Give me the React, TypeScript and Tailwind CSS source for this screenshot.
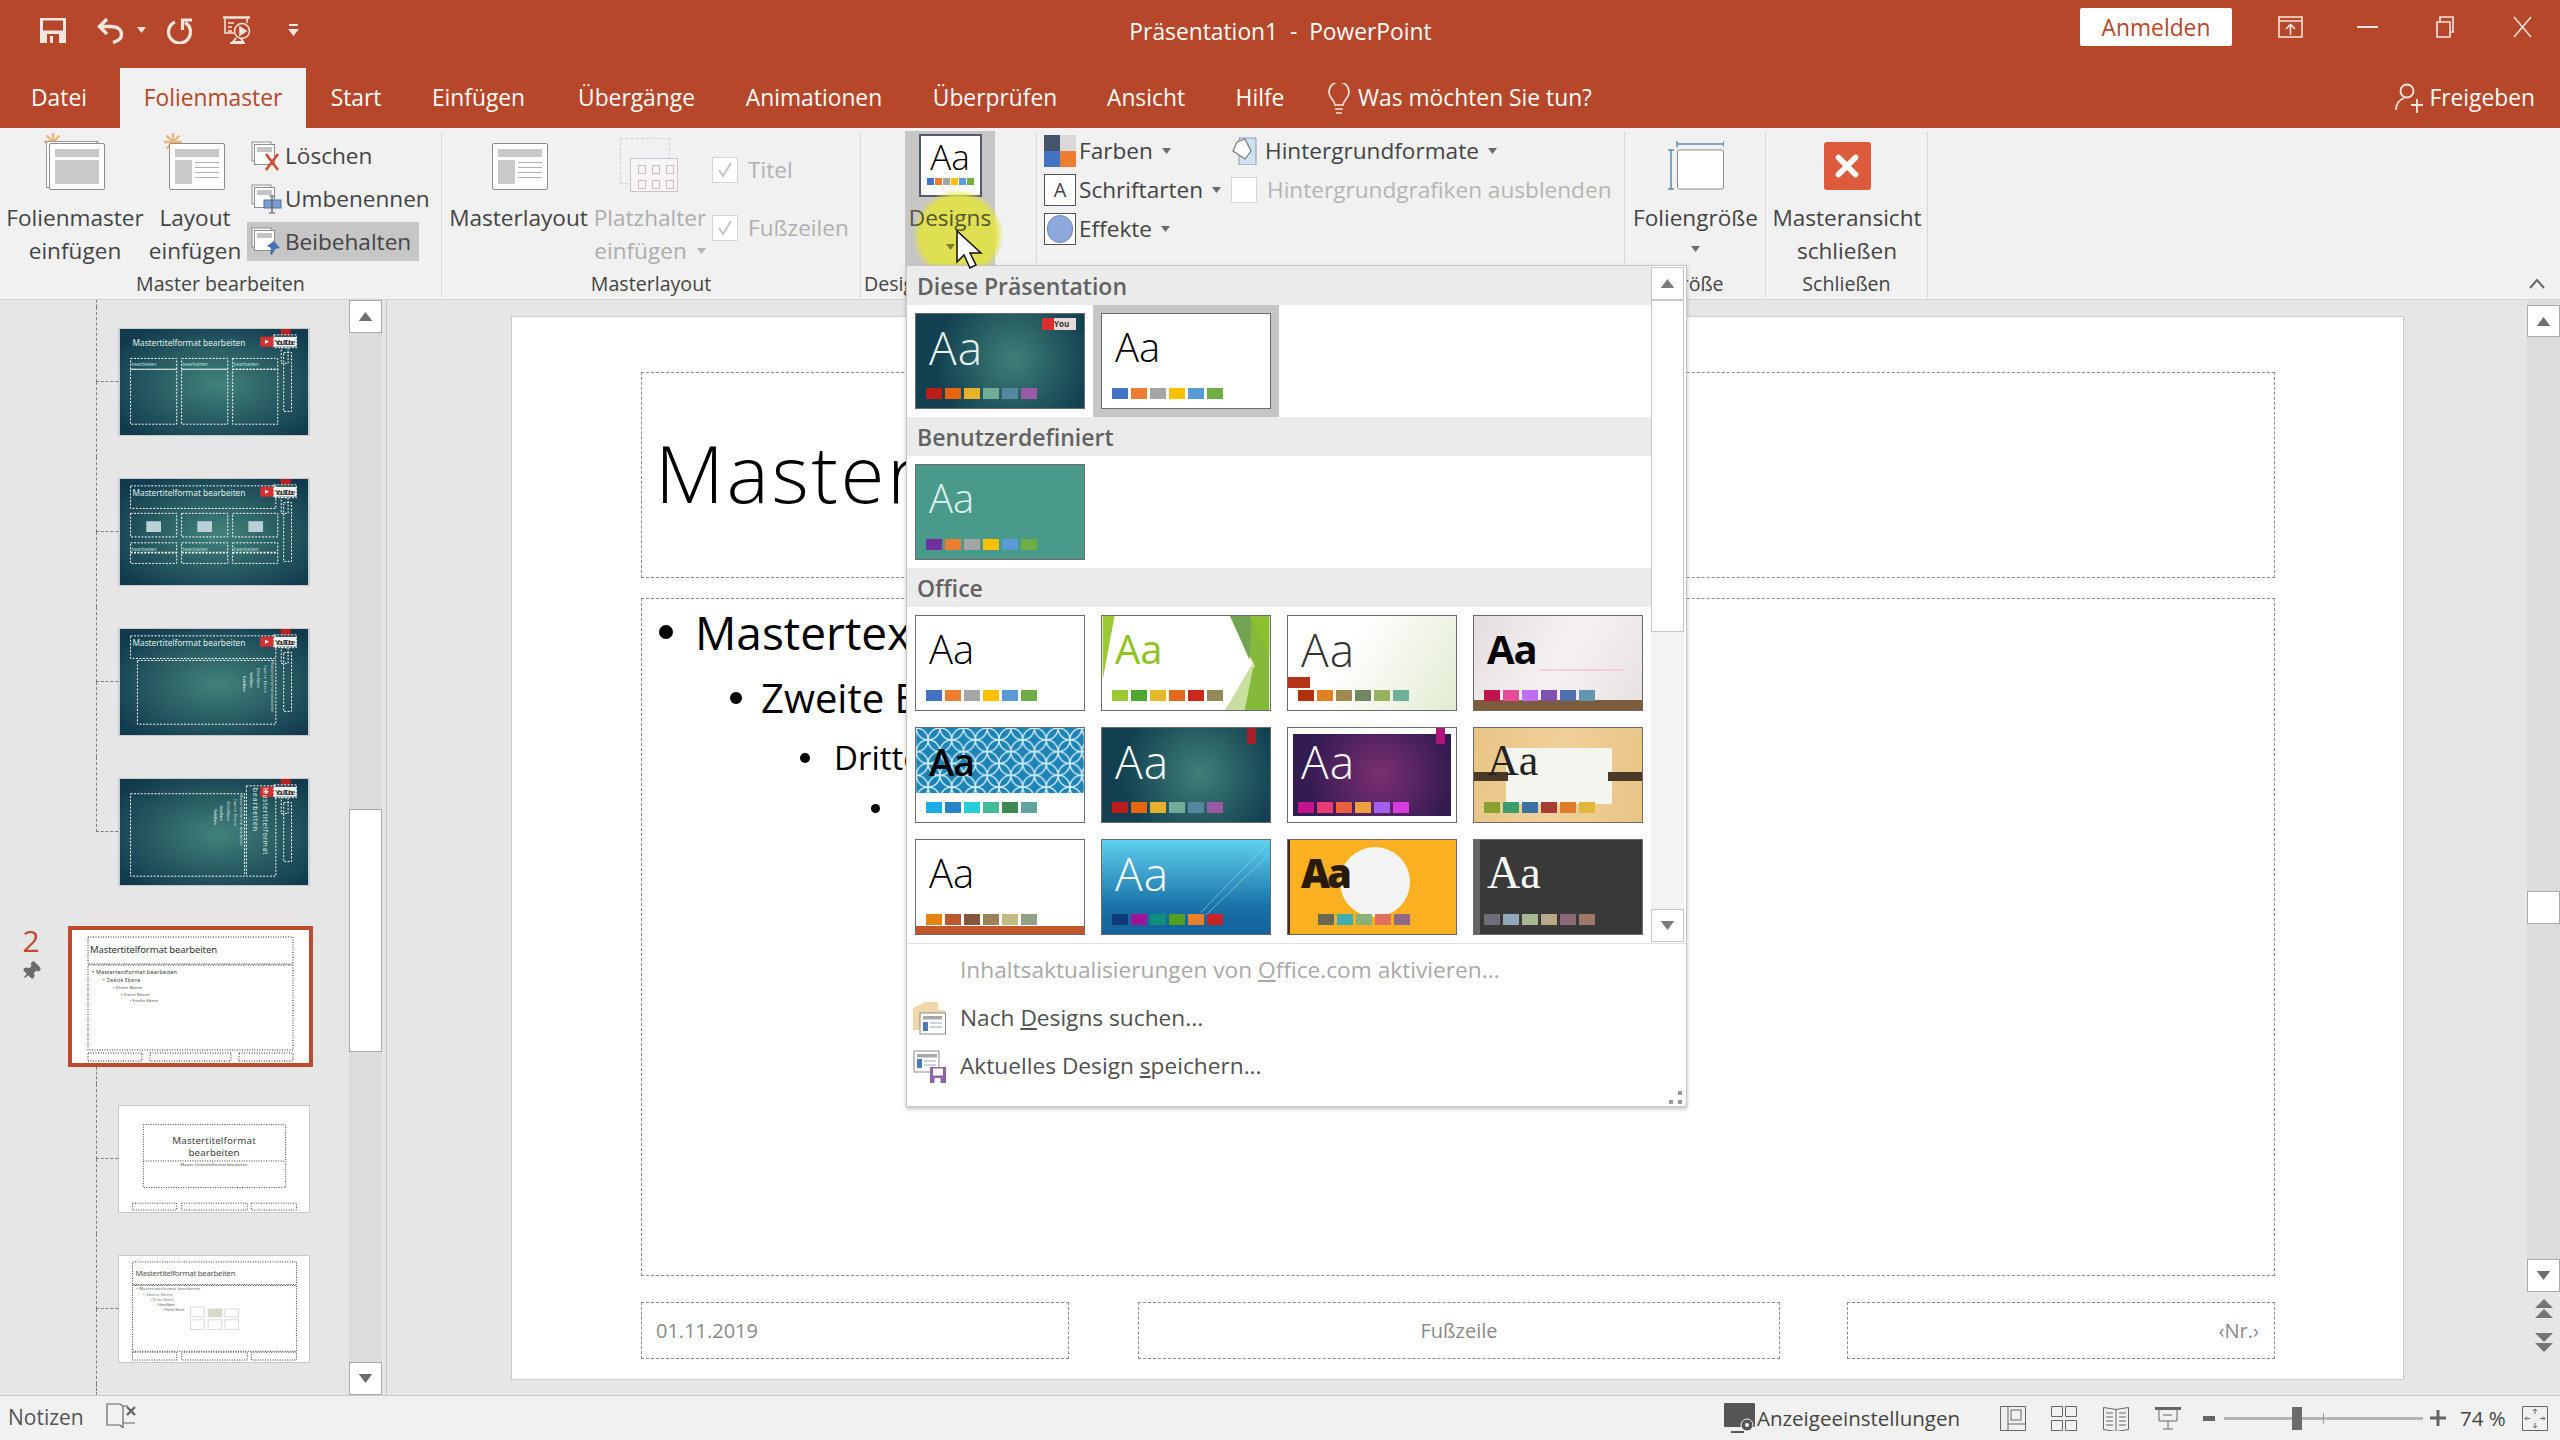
import { ReactNode } from "react"
import { Pin, X } from "lucide-react"

// ---- small icons ----

const Arrow = ({ color = "#6b6b6b", className = "" }: { color?: string; className?: string }) => (
  <svg width="9" height="6" viewBox="0 0 9 6" className={className}>
    <path d="M0 0h9L4.500 6z" fill={color} />
  </svg>
)

const Sun = () => (
  <svg width="20" height="20" viewBox="0 0 20 20" className="absolute left-0 top-0" stroke="#e9b878" strokeWidth="2.400">
    <path d="M10 1v18M1 10h18M3.500 3.500l13 13M16.500 3.500l-13 13" />
  </svg>
)

function LayoutIcon({ star, full, stacked }: { star?: boolean; full?: boolean; stacked?: boolean }) {
  return (
    <div className="relative w-[62px] h-[58px] -ml-[3px]">
      {star && <Sun />}
      {stacked && <div className="absolute left-[3px] top-[9px] w-[52px] h-[47px] border border-[#9a9a9a] bg-white" />}
      <div className="absolute left-[6px] top-[11px] w-[56px] h-[47px] rounded-[2px] border border-[#8c8c8c] bg-white p-[5px] flex flex-col gap-[3px]">
        <div className="h-[8px] bg-[#c9c9c9]" />
        {full ? (
          <div className="flex-1 bg-[#c9c9c9]" />
        ) : (
          <div className="flex-1 flex gap-[3px]">
            <div className="w-[17px] bg-[#c9c9c9]" />
            <div className="flex-1 flex flex-col gap-[4px] pt-[2px]">
              <div className="h-px bg-[#b0b0b0]" />
              <div className="h-px bg-[#b0b0b0]" />
              <div className="h-px bg-[#b0b0b0]" />
              <div className="h-px bg-[#b0b0b0]" />
            </div>
          </div>
        )}
      </div>
    </div>
  )
}

function SmallSlideIcon({ badge }: { badge: "x" | "rename" | "pin" }) {
  return (
    <svg width="31" height="30" viewBox="0 0 31 30">
      <rect x="1" y="1" width="19" height="19" fill="#f7f7f7" stroke="#8f8f8f" />
      <rect x="3.500" y="3.500" width="20" height="20" fill="#fff" stroke="#8f8f8f" />
      <rect x="6" y="6" width="15" height="5" fill="#c4c4c4" />
      {badge === "x" && <path d="M15 13l12 16M27 13L15 29" stroke="#cf4b32" strokeWidth="2.600" />}
      {badge === "rename" && (
        <g>
          <rect x="13" y="16" width="17" height="8" fill="#7aa0cf" stroke="#44709f" />
          <path d="M21 12v17M18 12h6M18 29h6" stroke="#555" strokeWidth="1.200" />
        </g>
      )}
      {badge === "pin" && <path d="M23 14l6 7-5 1-3 6-2-1 1-6-4-2z" fill="#4472b4" />}
    </svg>
  )
}

const FolderIcon = () => (
  <svg width="34" height="33" viewBox="0 0 34 33">
    <path d="M0 6l12-6h13v8h7v20H0z" fill="#f0d8ac" />
    <rect x="7" y="11" width="25.500" height="21" fill="#fff" stroke="#8a8a8a" />
    <rect x="10" y="14" width="19" height="3.500" fill="#a8a8a8" />
    <rect x="10" y="20" width="5" height="9" fill="#4a7bb5" />
    <path d="M17 21h12M17 25h12" stroke="#9ab" />
  </svg>
)

const SaveThemeIcon = () => (
  <svg width="34" height="33" viewBox="0 0 34 33">
    <rect x="1" y="1" width="25" height="21" fill="#fff" stroke="#8a8a8a" />
    <rect x="4" y="4" width="20" height="3.500" fill="#a8a8a8" />
    <rect x="4" y="9" width="5" height="9" fill="#4a7bb5" />
    <path d="M11 11h12M11 15h12" stroke="#9ab" />
    <path d="M17 17h16v16H17z" fill="#8f64ad" />
    <rect x="20" y="18.500" width="10" height="7" fill="#fff" />
    <rect x="21.500" y="28" width="6" height="5" fill="#fff" />
  </svg>
)

// ---- ribbon pieces ----

function LargeButton({ icon, lines, width, muted, arrow, arrowBelow }: { icon: ReactNode; lines: string[]; width: string; muted?: boolean; arrow?: boolean; arrowBelow?: boolean }) {
  return (
    <div className={`${width} flex flex-col items-center shrink-0`}>
      <div className="h-[69px] flex items-start justify-center">{icon}</div>
      {lines.map((l, i) => (
        <div key={l} className={`leading-[33px] whitespace-nowrap flex items-center ${muted ? "text-[#adadad]" : "text-[#444444]"}`}>
          {l}
          {arrow && i === lines.length - 1 && <Arrow color="#b5b5b5" className="ml-[10px]" />}
        </div>
      ))}
      {arrowBelow && <Arrow className="mt-[12px]" />}
    </div>
  )
}

function Group({ width, label, labelClass = "justify-center", children }: { width: string; label?: string; labelClass?: string; children: ReactNode }) {
  return (
    <div className={`${width} shrink-0 h-[166px] border-r border-[#d8d8d8] flex flex-col`}>
      <div className="h-[138px] flex">{children}</div>
      <div className={`h-[28px] flex items-center text-[19.600px] text-[#444444] whitespace-nowrap ${labelClass}`}>{label}</div>
    </div>
  )
}

const Checkbox = ({ checked }: { checked?: boolean }) => (
  <div className="w-[26px] h-[26px] border border-[#d5d5d5] bg-white flex items-center justify-center shrink-0">
    {checked && (
      <svg width="18" height="18" viewBox="0 0 18 18">
        <path d="M3 9l4 6 8-13" fill="none" stroke="#c4c4c4" strokeWidth="2" />
      </svg>
    )}
  </div>
)

function SmallRow({ badge, label, active }: { badge: "x" | "rename" | "pin"; label: string; active?: boolean }) {
  return (
    <div className={`h-[39px] w-fit flex items-center gap-[3px] pl-[4px] pr-[8px] ${active ? "bg-[#c6c6c6]" : ""}`}>
      <SmallSlideIcon badge={badge} />
      <span>{label}</span>
    </div>
  )
}

function ThemeRow({ icon, label, arrow = true }: { icon: ReactNode; label: string; arrow?: boolean }) {
  return (
    <div className="h-[32px] flex items-center whitespace-nowrap">
      <div className="w-[32px] h-[32px] shrink-0">{icon}</div>
      <span className="ml-[3px]">{label}</span>
      {arrow && <Arrow className="ml-[9px]" />}
    </div>
  )
}

// ---- left panel thumbnails ----

const YouTube = () => (
  <g>
    <rect x="164" y="0" width="10" height="6" fill="#b92020" />
    <rect x="143" y="8" width="14" height="10" rx="1" fill="#d63030" />
    <path d="M148 11l4 2-4 2z" fill="#fff" />
    <rect x="157" y="8" width="23" height="10" fill="#f2f2f2" />
    <text x="158" y="16" fontSize="8" fontFamily="Liberation Sans" fontWeight="700" fill="#333" textLength="21">YouTube</text>
    <rect x="157" y="6" width="23" height="13" fill="none" stroke="#fff" strokeDasharray="2 1.500" />
    <rect x="167" y="24" width="8" height="60" fill="none" stroke="#fff" strokeDasharray="2 1.500" />
    <rect x="164.500" y="19" width="7" height="16" fill="none" stroke="#fff" strokeDasharray="2 1.500" />
  </g>
)

function TealSlide({ children, title = true }: { children?: ReactNode; title?: boolean }) {
  return (
    <svg viewBox="0 0 192 108" className="block w-full h-full">
      <defs>
        <radialGradient id="tealBg" cx="52%" cy="52%" r="65%">
          <stop offset="0" stopColor="#42827a" />
          <stop offset="1" stopColor="#113a4d" />
        </radialGradient>
      </defs>
      <rect width="192" height="108" fill="url(#tealBg)" />
      {title && (
        <text x="13" y="17" fontSize="8.500" fill="#dfeeea" fontFamily="Noto Sans" textLength="115">Mastertitelformat bearbeiten</text>
      )}
      <YouTube />
      <g fill="none" stroke="#fff" strokeDasharray="2 1.500">{children}</g>
    </svg>
  )
}

const smallText = { fontFamily: "Noto Sans" }

const ThumbColumns = () => (
  <TealSlide>
    <rect x="11" y="30" width="47" height="11" />
    <rect x="63" y="30" width="47" height="11" />
    <rect x="115" y="30" width="46" height="11" />
    <rect x="11" y="41" width="47" height="56" />
    <rect x="63" y="41" width="47" height="56" />
    <rect x="115" y="41" width="46" height="56" />
    <text x="12" y="38" fontSize="5" fill="#a8e0d8" stroke="none" {...smallText}>bearbeiten</text>
    <text x="64" y="38" fontSize="5" fill="#a8e0d8" stroke="none" {...smallText}>bearbeiten</text>
    <text x="116" y="38" fontSize="5" fill="#a8e0d8" stroke="none" {...smallText}>bearbeiten</text>
  </TealSlide>
)

const ThumbCompare = () => (
  <TealSlide>
    <rect x="11" y="7" width="148" height="23" />
    <rect x="11" y="35" width="47" height="24" />
    <rect x="63" y="35" width="47" height="24" />
    <rect x="115" y="35" width="46" height="24" />
    <rect x="27" y="43" width="15" height="11" fill="#b9d0d6" stroke="none" />
    <rect x="79" y="43" width="15" height="11" fill="#b9d0d6" stroke="none" />
    <rect x="131" y="43" width="15" height="11" fill="#b9d0d6" stroke="none" />
    <rect x="11" y="65" width="47" height="21" />
    <rect x="63" y="65" width="47" height="21" />
    <rect x="115" y="65" width="46" height="21" />
    <path d="M11 75h47M63 75h47M115 75h46" strokeWidth="2" />
    <text x="12" y="73" fontSize="5" fill="#a8e0d8" stroke="none" {...smallText}>bearbeiten</text>
    <text x="64" y="73" fontSize="5" fill="#a8e0d8" stroke="none" {...smallText}>bearbeiten</text>
    <text x="116" y="73" fontSize="5" fill="#a8e0d8" stroke="none" {...smallText}>bearbeiten</text>
  </TealSlide>
)

const ThumbVertical = () => (
  <TealSlide>
    <rect x="11" y="7" width="148" height="23" />
    <rect x="18" y="32" width="141" height="65" />
    <g stroke="none" fill="#dfeeea" fontSize="3.500" {...smallText}>
      <text transform="translate(154 33) rotate(90)" textLength="52">Mastertextformat bearbeiten</text>
      <text transform="translate(147 37) rotate(90)" textLength="28">Zweite Ebene</text>
      <text transform="translate(140 40) rotate(90)" textLength="20">Dritte Ebene</text>
      <text transform="translate(133 44) rotate(90)" textLength="16">Vierte Ebene</text>
      <text transform="translate(126 48) rotate(90)" textLength="16">Fünfte Ebene</text>
    </g>
  </TealSlide>
)

const ThumbVerticalTitle = () => (
  <TealSlide title={false}>
    <rect x="11" y="15" width="116" height="84" />
    <rect x="129" y="7" width="30" height="92" />
    <g stroke="none" fill="#dfeeea" fontSize="7" {...smallText}>
      <text transform="translate(146 9) rotate(90)" textLength="68">Mastertitelformat</text>
      <text transform="translate(136 9) rotate(90)" textLength="44">bearbeiten</text>
    </g>
    <g stroke="none" fill="#dfeeea" fontSize="3.500" {...smallText}>
      <text transform="translate(122 16) rotate(90)" textLength="52">Mastertextformat bearbeiten</text>
      <text transform="translate(116 20) rotate(90)" textLength="28">Zweite Ebene</text>
      <text transform="translate(109 23) rotate(90)" textLength="20">Dritte Ebene</text>
      <text transform="translate(102 27) rotate(90)" textLength="16">Vierte Ebene</text>
      <text transform="translate(96 31) rotate(90)" textLength="16">Fünfte Ebene</text>
    </g>
  </TealSlide>
)

const ThumbMaster = () => (
  <svg viewBox="0 0 237 133" className="block w-full h-full bg-white">
    <g fill="none" stroke="#333" strokeDasharray="1 1.500">
      <rect x="16" y="7" width="205" height="27" />
      <rect x="16" y="35" width="205" height="85" />
      <rect x="16" y="123" width="54" height="8" />
      <rect x="78" y="123" width="81" height="8" />
      <rect x="167" y="123" width="54" height="8" />
    </g>
    <g fill="#333" {...smallText}>
      <text x="18" y="23" fontSize="9.500" textLength="127">Mastertitelformat bearbeiten</text>
      <text x="20" y="44" fontSize="5.500" textLength="85">• Mastertextformat bearbeiten</text>
      <text x="31" y="52" fontSize="4.500" textLength="37">• Zweite Ebene</text>
      <text x="41" y="59" fontSize="4" textLength="29">• Dritte Ebene</text>
      <text x="49" y="66" fontSize="3.500" textLength="28">• Vierte Ebene</text>
      <text x="58" y="72" fontSize="3.500" textLength="28">• Fünfte Ebene</text>
    </g>
  </svg>
)

const ThumbTitle = () => (
  <svg viewBox="0 0 192 108" className="block w-full h-full bg-white">
    <g fill="none" stroke="#333" strokeDasharray="1 1.500">
      <rect x="24" y="19" width="145" height="64" />
      <path d="M24 56h145" />
      <rect x="13" y="99" width="45" height="7" />
      <rect x="63" y="99" width="67" height="7" />
      <rect x="134" y="99" width="46" height="7" />
    </g>
    <g fill="#444" textAnchor="middle" {...smallText}>
      <text x="96" y="39" fontSize="10" textLength="85">Mastertitelformat</text>
      <text x="96" y="51" fontSize="10" textLength="52">bearbeiten</text>
      <text x="96" y="61" fontSize="4" textLength="68">Master-Untertitelformat bearbeiten</text>
    </g>
  </svg>
)

const ThumbContent = () => (
  <svg viewBox="0 0 192 108" className="block w-full h-full bg-white">
    <g fill="none" stroke="#333" strokeDasharray="1 1.500">
      <rect x="13" y="6" width="167" height="23" />
      <rect x="13" y="30" width="167" height="67" />
      <rect x="13" y="98" width="45" height="8" />
      <rect x="63" y="98" width="67" height="8" />
      <rect x="134" y="98" width="46" height="8" />
    </g>
    <g fill="#555" {...smallText}>
      <text x="16" y="20" fontSize="8" textLength="102">Mastertitelformat bearbeiten</text>
      <text x="17" y="35" fontSize="4" textLength="65">• Mastertextformat bearbeiten</text>
      <text x="24" y="41" fontSize="3.500" textLength="30">• Zweite Ebene</text>
      <text x="31" y="46" fontSize="3" textLength="24">• Dritte Ebene</text>
      <text x="38" y="51" fontSize="3" textLength="18">• Vierte Ebene</text>
      <text x="44" y="56" fontSize="3" textLength="22">• Fünfte Ebene</text>
    </g>
    <g fill="none" stroke="#d8d8d8">
      <rect x="72" y="52" width="14" height="10" />
      <rect x="90" y="54" width="14" height="8" fill="#dcd8c8" />
      <rect x="107" y="54" width="14" height="8" />
      <rect x="72" y="65" width="14" height="10" />
      <rect x="90" y="65" width="14" height="10" />
      <rect x="107" y="65" width="14" height="10" />
    </g>
  </svg>
)

function TreeRow({ height, last, children }: { height: string; last?: boolean; children: ReactNode }) {
  return (
    <div className={`${height} flex items-center`}>
      <div className="w-[22px] self-stretch flex flex-col shrink-0">
        <div className="h-1/2 border-l border-b border-dashed border-[#7f7f7f]" />
        {!last && <div className="h-1/2 border-l border-dashed border-[#7f7f7f]" />}
      </div>
      <div className="w-[192px] h-[108px] border-[1.500px] border-[#c9c9c9] bg-white shrink-0">{children}</div>
    </div>
  )
}

function Scrollbar({ up, down, thumb, children }: { up: string; down: string; thumb?: ReactNode; children?: ReactNode }) {
  return (
    <div className="w-[33px] h-full flex flex-col bg-[#dcdcdc] shrink-0">
      <div className={`${up} shrink-0 bg-white border border-[#ababab] flex items-center justify-center`}>
        <Arrow color="#6f6f6f" className="w-[17px] h-[9px] rotate-180" />
      </div>
      {thumb}
      <div className="flex-1" />
      <div className={`${down} shrink-0 bg-white border border-[#ababab] flex items-center justify-center`}>
        <Arrow color="#6f6f6f" className="w-[17px] h-[9px]" />
      </div>
      {children}
    </div>
  )
}

function LeftPanel() {
  return (
    <div className="w-[387px] h-full shrink-0 flex border-r border-[#c8c8c8] pr-[4px]">
      <div className="w-[349px] h-full overflow-hidden shrink-0">
        <div className="ml-[96px]">
          <div className="h-[7px] border-l border-dashed border-[#7f7f7f]" />
          <TreeRow height="h-[150px]"><ThumbColumns /></TreeRow>
          <TreeRow height="h-[150px]"><ThumbCompare /></TreeRow>
          <TreeRow height="h-[150px]"><ThumbVertical /></TreeRow>
          <TreeRow height="h-[150px]" last><ThumbVerticalTitle /></TreeRow>
        </div>
        <div className="mt-[19px] h-[141px] flex">
          <div className="w-[68px] shrink-0 flex flex-col items-center pr-[6px]">
            <span className="text-[30px] leading-[30px] text-[#c0492c]">2</span>
            <Pin className="mt-[5px] w-[20px] h-[20px] rotate-45 fill-[#6b6b6b] text-[#6b6b6b]" />
          </div>
          <div className="w-[245px] h-[141px] border-[4px] border-[#bf4a2e] shrink-0">
            <ThumbMaster />
          </div>
        </div>
        <div className="ml-[96px]">
          <div className="h-[17px] border-l border-dashed border-[#7f7f7f]" />
          <TreeRow height="h-[150px]"><ThumbTitle /></TreeRow>
          <TreeRow height="h-[150px]"><ThumbContent /></TreeRow>
          <div className="h-[11px] border-l border-dashed border-[#7f7f7f]" />
        </div>
      </div>
      <Scrollbar
        up="h-[33px]"
        down="h-[33px]"
        thumb={<div className="mt-[476px] h-[243px] bg-white border border-[#ababab] shrink-0" />}
      />
    </div>
  )
}

// ---- design gallery ----

type Theme = {
  aa: string
  bg: string
  swatches: string[]
  swatchOffset?: string
  deco?: ReactNode
}

const whiteSw = ["#4472c4", "#ed7d31", "#a5a5a5", "#ffc000", "#5b9bd5", "#70ad47"]
const tealSw = ["#bb1d1d", "#e8650f", "#e6b12c", "#72ae97", "#5487a0", "#9a5aa5"]

const tealBg = "bg-[radial-gradient(circle_at_58%_48%,#3f7f78,#124050_72%)]"
const base = "text-[40px] font-light"
const gothic = "text-[46px] tracking-[1px] font-light"

const YtMini = () => (
  <div className="absolute right-[8px] top-[4px] flex h-[12px]">
    <div className="w-[12px] bg-[#d83030]" />
    <div className="w-[22px] bg-[#e9d8d8] text-[8px] leading-[12px] font-bold text-[#333] overflow-hidden">You</div>
  </div>
)

const GreenFacets = () => (
  <svg viewBox="0 0 170 96" className="absolute inset-0 w-full h-full">
    <path d="M0 0h12L0 65z" fill="#9cc832" />
    <path d="M130 0h40v96h-45l30-45z" fill="#86b83c" />
    <path d="M130 0h22l-2 45z" fill="#72a350" />
    <path d="M150 0h20v40z" fill="#8dc02e" />
    <path d="M155 45l-30 51h20z" fill="#c9dfa0" />
  </svg>
)

const Weave = () => (
  <svg viewBox="0 0 170 66" className="absolute left-0 top-0 w-full h-[65px]">
    <defs>
      <pattern id="weave" width="24" height="24" patternUnits="userSpaceOnUse">
        <rect width="24" height="24" fill="#1b83b5" />
        <g fill="none" stroke="#d5eef7" strokeWidth="1.400">
          <circle cx="0" cy="12" r="12" />
          <circle cx="24" cy="12" r="12" />
          <circle cx="12" cy="0" r="12" />
          <circle cx="12" cy="24" r="12" />
        </g>
      </pattern>
    </defs>
    <rect width="170" height="66" fill="url(#weave)" />
  </svg>
)

const officeThemes: Theme[] = [
  { aa: `${base} text-black`, bg: "bg-white", swatches: whiteSw },
  {
    aa: "text-[40px] text-[#8fc31f]",
    bg: "bg-white",
    swatches: ["#9cc832", "#4ea72e", "#e6b82c", "#e5681f", "#c9281c", "#938a5a"],
    deco: <GreenFacets />,
  },
  {
    aa: `${gothic} text-[#333333]`,
    bg: "bg-[linear-gradient(120deg,#ffffff_35%,#e2ebd2)]",
    swatches: ["#b03010", "#e08020", "#a08850", "#708860", "#98b060", "#70b098"],
    deco: <div className="absolute left-0 top-[61px] w-[22px] h-[11px] bg-[#b5341a]" />,
  },
  {
    aa: "text-[40px] text-black font-bold tracking-[-1px]",
    bg: "bg-[linear-gradient(120deg,#e4dde0,#f5f1f2_50%,#e8e0e2)]",
    swatches: ["#c0144c", "#e84c98", "#c06cf0", "#8050b0", "#5070b0", "#6098b0"],
    deco: (
      <>
        <div className="absolute left-[65px] right-[16px] top-[53px] h-[2px] bg-[#eed2d8]" />
        <div className="absolute left-0 right-0 bottom-0 h-[10px] bg-[#7d5b3c]" />
      </>
    ),
  },
  {
    aa: "text-[38px] text-black font-semibold tracking-[-1px]",
    bg: "bg-white",
    swatches: ["#1cade4", "#2683c6", "#27ced7", "#42ba97", "#3e8853", "#62a39f"],
    deco: <Weave />,
  },
  {
    aa: `${gothic} text-white`,
    bg: tealBg,
    swatches: tealSw,
    deco: <div className="absolute right-[14px] top-0 w-[9px] h-[16px] bg-[#a81f2a]" />,
  },
  {
    aa: `${gothic} text-white`,
    bg: "bg-white",
    swatches: ["#c0148c", "#e83c78", "#e8603c", "#eca040", "#a060f0", "#d83ce0"],
    deco: (
      <>
        <div className="absolute left-[5px] right-[5px] top-[6px] bottom-[6px] bg-[radial-gradient(circle_at_55%_50%,#7b2f72,#341b52_75%)]" />
        <div className="absolute right-[11px] top-0 w-[9px] h-[16px] bg-[#b0147c]" />
      </>
    ),
  },
  {
    aa: "text-[44px] text-[#222222] font-['Liberation_Serif',serif]",
    bg: "bg-[linear-gradient(100deg,#e8c486,#f0d09a_50%,#e8c486)]",
    swatches: ["#8aa030", "#3c9c70", "#3c70a0", "#a83c34", "#e07c28", "#e0b83c"],
    deco: (
      <>
        <div className="absolute left-[32px] right-[30px] top-[20px] h-[56px] bg-[#f5f5f0]" />
        <div className="absolute left-0 w-[34px] top-[44px] h-[9px] bg-[#4a3828]" />
        <div className="absolute right-0 w-[34px] top-[44px] h-[9px] bg-[#4a3828]" />
      </>
    ),
  },
  {
    aa: `${base} text-black`,
    bg: "bg-white",
    swatches: ["#e48312", "#bd582c", "#865640", "#9b8357", "#c2bc80", "#94a088"],
    deco: <div className="absolute left-0 right-0 bottom-0 h-[8px] bg-[#c0562c]" />,
  },
  {
    aa: `${gothic} text-white`,
    bg: "bg-[linear-gradient(180deg,#5fd0ee,#1a73a8_70%,#14609a)]",
    swatches: ["#0f3a78", "#a0149c", "#10907c", "#54a020", "#e8802c", "#c82428"],
    deco: (
      <svg viewBox="0 0 170 96" className="absolute inset-0 w-full h-full">
        <path d="M168 4L100 74M170 14L106 76" stroke="#9fdcf0" strokeOpacity="0.6" fill="none" />
      </svg>
    ),
  },
  {
    aa: "text-[40px] text-[#2a1a08] font-extrabold tracking-[-3px]",
    bg: "bg-[#fab020]",
    swatches: ["#6a6a50", "#3cb0b0", "#88b078", "#e07060", "#906888"],
    swatchOffset: "ml-[30px]",
    deco: (
      <>
        <div className="absolute left-0 top-0 bottom-0 w-[2px] bg-[#4a2a08]" />
        <div className="absolute left-[52px] top-[7px] w-[70px] h-[70px] rounded-full bg-[#f4f4f4]" />
      </>
    ),
  },
  {
    aa: "text-[46px] text-white font-['Liberation_Serif',serif]",
    bg: "bg-[#3a3a3a]",
    swatches: ["#6f6f78", "#90a8b8", "#a8b890", "#b8a888", "#8c6878", "#a07868"],
    deco: <div className="absolute left-0 top-0 bottom-0 w-[6px] bg-[#666666]" />,
  },
]

function DesignThumb({ theme, selected }: { theme: Theme; selected?: boolean }) {
  return (
    <div className={`w-[186px] h-[112px] flex items-center justify-center shrink-0 ${selected ? "bg-[#c6c6c6]" : ""}`}>
      <div className={`relative w-[170px] h-[96px] overflow-hidden border border-[#6b6b6b] flex flex-col ${theme.bg}`}>
        {theme.deco}
        <span className={`relative pl-[13px] pt-[7px] h-[74px] leading-[52px] ${theme.aa}`}>Aa</span>
        <div className={`relative flex gap-[3px] ${theme.swatchOffset ?? "ml-[10px]"}`}>
          {theme.swatches.map((c, i) => (
            <svg key={i} width="16" height="11" className="block">
              <rect width="16" height="11" fill={c} />
            </svg>
          ))}
        </div>
      </div>
    </div>
  )
}

const SectionHead = ({ label }: { label: string }) => (
  <div className="h-[39px] bg-[#ebebeb] pl-[10px] pt-[2px] flex items-center text-[23px] font-semibold text-[#626262]">{label}</div>
)

function DesignPopup() {
  return (
    <div className="absolute left-[906px] top-[265px] w-[781px] h-[842px] bg-white border border-[#c6c6c6] shadow-[0_2px_4px_rgba(0,0,0,0.25)] z-20 flex flex-col">
      <div className="h-[677px] flex shrink-0">
        <div className="w-[744px] shrink-0">
          <SectionHead label="Diese Präsentation" />
          <div className="flex">
            <DesignThumb theme={{ aa: `${gothic} text-[#e9f3f0]`, bg: tealBg, swatches: tealSw, deco: <YtMini /> }} />
            <DesignThumb theme={{ aa: `${base} text-black`, bg: "bg-white", swatches: whiteSw }} selected />
          </div>
          <SectionHead label="Benutzerdefiniert" />
          <div className="flex">
            <DesignThumb
              theme={{
                aa: `${base} text-[#dff2ee]`,
                bg: "bg-[#4a9a8c]",
                swatches: ["#7030a0", "#ed7d31", "#a5a5a5", "#ffc000", "#5b9bd5", "#70ad47"],
              }}
            />
          </div>
          <SectionHead label="Office" />
          <div className="grid grid-cols-4 w-[744px]">
            {officeThemes.map((t, i) => (
              <DesignThumb key={i} theme={t} />
            ))}
          </div>
        </div>
        <div className="pt-[1px] h-full">
          <div className="w-[33px] h-[675px] flex flex-col bg-[#f3f3f3]">
            <div className="h-[33px] bg-white border border-[#c6c6c6] flex items-center justify-center shrink-0">
              <Arrow color="#7a7a7a" className="w-[17px] h-[9px] rotate-180" />
            </div>
            <div className="h-[332px] bg-white border border-[#c6c6c6] shrink-0" />
            <div className="flex-1" />
            <div className="h-[33px] bg-white border border-[#c6c6c6] flex items-center justify-center shrink-0">
              <Arrow color="#7a7a7a" className="w-[17px] h-[9px]" />
            </div>
          </div>
        </div>
      </div>
      <div className="border-t border-[#e1e1e1] pt-[2px] text-[22.700px] text-[#505050]">
        <div className="h-[48px] flex items-center pl-[53px] text-[#a8a8a8] whitespace-nowrap">
          <span>Inhaltsaktualisierungen von <u>O</u>ffice.com aktivieren...</span>
        </div>
        <div className="h-[48px] flex items-center pl-[6px] gap-[13px]">
          <FolderIcon />
          <span>Nach <u>D</u>esigns suchen...</span>
        </div>
        <div className="h-[48px] flex items-center pl-[6px] gap-[13px]">
          <SaveThemeIcon />
          <span>Aktuelles Design <u>s</u>peichern...</span>
        </div>
      </div>
      <div className="flex-1 flex items-end justify-end pr-[4px] pb-[2px]">
        <svg width="13" height="13" viewBox="0 0 13 13" fill="#9a9a9a">
          <rect x="9" y="0" width="4" height="4" />
          <rect x="0" y="9" width="4" height="4" />
          <rect x="9" y="9" width="4" height="4" />
        </svg>
      </div>
    </div>
  )
}

// ---- ribbon ----

function TitleBar() {
  return (
    <div className="h-[68px] flex text-white">
      <div className="flex-1 basis-0 h-[60px] flex items-center pl-[40px]">
        <svg width="26" height="25" viewBox="0 0 26 25" fill="#f6e6e0">
          <path d="M0 0h26v25H0zM3 2.500v10h20v-10zM7 16v9h12v-9zM10 18h3v7h-3z" fillRule="evenodd" />
        </svg>
        <svg width="27" height="27" viewBox="0 0 27 27" fill="none" stroke="#f6e6e0" strokeWidth="3.400" className="ml-[31px]">
          <path d="M10 2L2.500 9.500 10 17" />
          <path d="M2.500 9.500H14c7 0 10.500 3.500 10.500 8 0 4-3 6.500-8.500 8" />
        </svg>
        <Arrow color="#f6e6e0" className="ml-[13px]" />
        <svg width="27" height="28" viewBox="0 0 27 28" fill="none" stroke="#f6e6e0" strokeWidth="3.200" className="ml-[20px]">
          <path d="M9 6a11 11 0 1 0 10 .5" />
          <path d="M16.500 14V4H26" />
        </svg>
        <svg width="28" height="28" viewBox="0 0 28 28" fill="none" stroke="#f6e6e0" strokeWidth="1.500" className="ml-[30px]">
          <path d="M0 1.500h27" strokeWidth="2.500" />
          <path d="M2 3v14h9M5 7h6M5 11h4M5 15h4M24 3v4" />
          <circle cx="19" cy="15" r="7.500" />
          <path d="M17 11l6 4-6 4z" fill="#f6e6e0" />
          <path d="M13 22l-3 4h10l-2-4M7 27h15" strokeWidth="2" />
        </svg>
        <svg width="11" height="12" viewBox="0 0 11 12" fill="#f6e6e0" className="ml-[37px]">
          <path d="M1 0h9v2H1zM0 5h11l-5.500 7z" />
        </svg>
      </div>
      <div className="text-[22.800px] pt-[15px] pr-[14px] leading-[34px] whitespace-pre">Präsentation1  -  PowerPoint</div>
      <div className="flex-1 basis-0 flex justify-end items-start pt-[8px] pr-[25px]">
        <div className="w-[152px] h-[38px] pt-[2px] bg-white rounded-[2px] flex items-center justify-center text-[22.800px] text-[#b7472a]">Anmelden</div>
        <svg width="25" height="22" viewBox="0 0 25 22" fill="none" stroke="#f6e6e0" strokeWidth="1.600" className="ml-[46px] mt-[8px]">
          <path d="M1 1h23v20H1zM1 5h23M12.500 19V9M8 13l4.500-4.500L17 13" />
        </svg>
        <div className="ml-[54px] mt-[18px] w-[21px] h-[2px] bg-[#f6e6e0]" />
        <svg width="22" height="22" viewBox="0 0 22 22" fill="none" stroke="#f6e6e0" strokeWidth="1.600" className="ml-[55px] mt-[8px]">
          <path d="M4 6h13v15H4zM7 6V1h13v15h-3" />
        </svg>
        <svg width="25" height="22" viewBox="0 0 25 22" fill="none" stroke="#f6e6e0" strokeWidth="1.500" className="ml-[55px] mt-[8px]">
          <path d="M4 1l17 20M21 1L4 21" />
        </svg>
      </div>
    </div>
  )
}

function TabBar() {
  const tab = "h-full flex items-center justify-center text-white pt-[1px]"
  return (
    <div className="h-[60px] flex text-[22.800px] whitespace-nowrap">
      <div className={`${tab} w-[120px] pr-[2px]`}>Datei</div>
      <div className="w-[186px] h-full pt-[1px] flex items-center justify-center bg-[#f1f1f1] text-[#b7472a]">Folienmaster</div>
      <div className={`${tab} w-[100px]`}>Start</div>
      <div className={`${tab} w-[145px]`}>Einfügen</div>
      <div className={`${tab} w-[171px]`}>Übergänge</div>
      <div className={`${tab} w-[184px]`}>Animationen</div>
      <div className={`${tab} w-[178px]`}>Überprüfen</div>
      <div className={`${tab} w-[124px]`}>Ansicht</div>
      <div className={`${tab} w-[104px]`}>Hilfe</div>
      <div className="h-full pt-[1px] flex items-center text-white ml-[15px]">
        <svg width="25" height="32" viewBox="0 0 25 32" fill="none" stroke="#f6e6e0" strokeWidth="1.600">
          <path d="M8 22c0-4-6-7-6-13a10 10 0 0 1 20 0c0 6-6 9-6 13zM8 26h8M9 30h6" />
        </svg>
        <span className="ml-[6px]">Was möchten Sie tun?</span>
      </div>
      <div className="ml-auto h-full pt-[1px] flex items-center text-white pr-[25px]">
        <svg width="30" height="32" viewBox="0 0 30 32" fill="none" stroke="#f6e6e0" strokeWidth="1.800">
          <circle cx="13" cy="8" r="6.500" />
          <path d="M2 27c0-7 3-10 8-12M17 22h12M23 16v14" />
        </svg>
        <span className="ml-[5px]">Freigeben</span>
      </div>
    </div>
  )
}

function Ribbon() {
  return (
    <div className="h-[172px] bg-[#f1f1f1] border-b border-[#d2d2d2] flex pt-[4px] text-[22.600px] text-[#444444]">
      <Group width="w-[442px]" label="Master bearbeiten">
        <LargeButton width="w-[150px]" icon={<LayoutIcon star full stacked />} lines={["Folienmaster", "einfügen"]} />
        <LargeButton width="w-[90px]" icon={<LayoutIcon star />} lines={["Layout", "einfügen"]} />
        <div className="pl-[7px] pt-[4px] flex flex-col gap-[4px] whitespace-nowrap">
          <SmallRow badge="x" label="Löschen" />
          <SmallRow badge="rename" label="Umbenennen" />
          <SmallRow badge="pin" label="Beibehalten" active />
        </div>
      </Group>
      <Group width="w-[419px]" label="Masterlayout">
        <LargeButton width="w-[153px]" icon={<LayoutIcon />} lines={["Masterlayout"]} />
        <LargeButton
          width="w-[110px]"
          muted
          arrow
          icon={
            <div className="relative w-[60px] h-[60px]">
              <div className="absolute left-0 top-[6px] w-[50px] h-[46px] border border-dashed border-[#cfcfcf]" />
              <div className="absolute left-[10px] top-[26px] w-[48px] h-[34px] border border-[#c9c0c9] bg-[#f7f5f7] pt-[6px] pl-[7px] grid grid-cols-3 gap-[3px]">
                {[0, 1, 2, 3, 4, 5].map((i) => (
                  <div key={i} className="w-[8px] h-[9px] border border-[#c8bcc8]" />
                ))}
              </div>
            </div>
          }
          lines={["Platzhalter", "einfügen"]}
        />
        <div className="ml-[7px] pt-[25px] flex flex-col gap-[32px] text-[#b0b0b0]">
          <div className="h-[26px] flex items-center gap-[10px]"><Checkbox checked />Titel</div>
          <div className="h-[26px] flex items-center gap-[10px]"><Checkbox checked />Fußzeilen</div>
        </div>
      </Group>
      <Group width="w-[176px]" label="Designs" labelClass="justify-start pl-[3px]">
        <div className="ml-[44px] w-[90px] h-[136px] bg-[#c6c6c6] flex flex-col items-center -mt-[1px]">
          <div className="mt-[3px] w-[63px] h-[63px] border-[2px] border-[#55596b] bg-white flex flex-col items-center">
            <span className="text-[35px] leading-[40px] mt-[1px] text-black font-light">Aa</span>
            <div className="flex gap-[1px] mt-[1px]">
              {whiteSw.map((c) => (
                <svg key={c} width="7" height="7" className="block"><rect width="7" height="7" fill={c} /></svg>
              ))}
            </div>
          </div>
          <div className="relative z-[15] mt-[4px] leading-[33px] text-[#55552e]">Designs</div>
          <Arrow color="#7d7d2a" className="relative z-[15] mt-[10px]" />
        </div>
      </Group>
      <Group width="w-[588px]">
        <div className="pl-[7px] pt-[3px] flex flex-col gap-[7px] w-[193px] shrink-0">
          <ThemeRow
            label="Farben"
            icon={
              <div className="w-full h-full grid grid-cols-2 grid-rows-2">
                <div className="bg-[#44546a]" />
                <div className="bg-[#d9d9d9]" />
                <div className="bg-[#4472c4]" />
                <div className="bg-[#ed7d31]" />
              </div>
            }
          />
          <ThemeRow
            label="Schriftarten"
            icon={<div className="w-full h-full border border-[#555] bg-white flex items-center justify-center text-[20px] leading-none">A</div>}
          />
          <ThemeRow
            label="Effekte"
            icon={
              <div className="w-full h-full border border-[#555] bg-white flex items-center justify-center">
                <div className="w-[26px] h-[28px] rounded-full bg-[#8ea9db] border border-[#6f86c0]" />
              </div>
            }
          />
        </div>
        <div className="pl-[1px] pt-[3px] flex flex-col gap-[7px] whitespace-nowrap">
          <div className="h-[32px] flex items-center">
            <svg width="31" height="28" viewBox="0 0 31 28" className="shrink-0">
              <path d="M8 1h17v27H8z" fill="#cfe0f0" stroke="#8a9db0" />
              <path d="M6 5l8-3 6 12-6 8-9-6-3-2z" fill="#fff" stroke="#777" strokeWidth="1.200" />
            </svg>
            <span className="ml-[3px]">Hintergrundformate</span>
            <Arrow className="ml-[9px]" />
          </div>
          <div className="h-[32px] flex items-center text-[#b5b5b5]">
            <Checkbox />
            <span className="ml-[10px]">Hintergrundgrafiken ausblenden</span>
          </div>
        </div>
      </Group>
      <Group width="w-[141px]" label="Größe">
        <LargeButton
          width="w-[141px]"
          arrowBelow
          icon={
            <svg width="56" height="50" viewBox="0 0 56 50" className="mt-[8px]">
              <path d="M9 1v6M56 1v6M9 4h47M0 10h6M0 49h6M3 10v39" stroke="#5a8cb8" strokeWidth="1.500" fill="none" />
              <rect x="9.500" y="10" width="46" height="39" rx="2" fill="#fff" stroke="#8c8c8c" />
            </svg>
          }
          lines={["Foliengröße"]}
        />
      </Group>
      <Group width="w-[162px]" label="Schließen">
        <LargeButton
          width="w-[162px]"
          icon={
            <div className="mt-[10px] w-[47px] h-[48px] rounded-[3px] bg-[#dd5a3c] flex items-center justify-center">
              <X className="w-[34px] h-[34px] text-white" strokeWidth={4} />
            </div>
          }
          lines={["Masteransicht", "schließen"]}
        />
      </Group>
      <div className="flex-1 flex items-end justify-end pr-[15px] pb-[10px]">
        <svg width="16" height="11" viewBox="0 0 16 11" fill="none" stroke="#666" strokeWidth="2">
          <path d="M1 10l7-8 7 8" />
        </svg>
      </div>
    </div>
  )
}

// ---- slide ----

const Bullet = ({ size }: { size: string }) => <div className={`${size} rounded-full bg-black shrink-0`} />

function Slide() {
  const dotted = "border border-dashed border-[#8a8a8a]"
  return (
    <div className="w-[1893px] h-[1064px] bg-white border border-[#cbcbcb] pl-[129px] pt-[55px] shrink-0 text-black">
      <div className={`w-[1634px] h-[206px] ${dotted} flex items-center pl-[13px] pb-[6px] text-[80px] tracking-[2.500px] font-light whitespace-nowrap`}>
        {/* the popup hides the rest of the title, so it must not run out past it */}
        <div className="w-[900px] overflow-hidden">Mastertitelformat bearbeiten</div>
      </div>
      <div className={`w-[1634px] h-[678px] mt-[20px] ${dotted} whitespace-nowrap`}>
        <div className="h-[66px] flex items-center pl-[17px] text-[46px]">
          <Bullet size="w-[14px] h-[14px]" />
          <span className="ml-[22px]">Mastertextformat bearbeiten</span>
        </div>
        <div className="h-[64px] mt-[1px] flex items-center pl-[88px] text-[40px]">
          <Bullet size="w-[12px] h-[12px]" />
          <span className="ml-[19px]">Zweite Ebene</span>
        </div>
        <div className="h-[54px] mt-[1px] flex items-center pl-[158px] text-[33px]">
          <Bullet size="w-[10px] h-[10px]" />
          <span className="ml-[24px]">Dritte Ebene</span>
        </div>
        <div className="h-[46px] flex items-center pl-[229px] text-[29px]">
          <Bullet size="w-[9px] h-[9px]" />
          <span className="ml-[40px]">Vierte Ebene</span>
        </div>
        <div className="h-[46px] flex items-center pl-[300px] text-[29px]">
          <Bullet size="w-[9px] h-[9px]" />
          <span className="ml-[24px]">Fünfte Ebene</span>
        </div>
      </div>
      <div className="w-[1634px] h-[57px] mt-[26px] flex text-[20px] text-[#8a8a8a]">
        <div className={`w-[428px] h-full ${dotted} flex items-center pl-[14px]`}>01.11.2019</div>
        <div className={`w-[642px] h-full ml-[69px] ${dotted} flex items-center justify-center`}>Fußzeile</div>
        <div className={`w-[428px] h-full ml-[67px] ${dotted} flex items-center justify-end pr-[15px]`}>‹Nr.›</div>
      </div>
    </div>
  )
}

const Editor = () => (
  <div className="flex-1 h-full flex">
    <div className="flex-1 pl-[124px] pt-[16px]">
      <Slide />
    </div>
    <Scrollbar
      up="h-[32px] mt-[5px]"
      down="h-[33px]"
      thumb={<div className="mt-[554px] h-[33px] bg-white border border-[#ababab] shrink-0" />}
    >
      <div className="h-[103px] flex flex-col items-center pt-[7px] bg-[#e6e6e6]">
        <svg width="20" height="20" viewBox="0 0 20 20" fill="#757575"><path d="M10 0l9 9H1zM10 10l9 9H1z" /></svg>
        <svg width="20" height="20" viewBox="0 0 20 20" fill="#757575" className="mt-[14px]"><path d="M1 0h18l-9 9zM1 10h18l-9 9z" /></svg>
      </div>
    </Scrollbar>
  </div>
)

// ---- status bar ----

function StatusBar() {
  return (
    <div className="h-[45px] bg-[#f1f1f1] border-t border-[#c9c9c9] flex items-center text-[20.500px] text-[#444444] whitespace-nowrap">
      <span className="ml-[8px] text-[#555555] text-[21px]">Notizen</span>
      <svg width="31" height="25" viewBox="0 0 31 25" fill="none" stroke="#666" strokeWidth="1.200" className="ml-[22px] -mt-[6px]">
        <path d="M1 1h13l3 2v22l-3-3H1zM17 3h5M17 20h12" />
        <path d="M21 4l8 8M29 4l-8 8" strokeWidth="2.400" />
      </svg>
      <div className="ml-auto flex items-center">
        <svg width="32" height="30" viewBox="0 0 32 30">
          <rect x="0" y="0" width="31" height="24" rx="1" fill="#555" />
          <circle cx="23" cy="22" r="6" fill="#555" stroke="#f1f1f1" />
          <circle cx="23" cy="22" r="2" fill="#f1f1f1" />
          <path d="M7 29h13" stroke="#555" strokeWidth="2" />
        </svg>
        <span className="ml-[1px]">Anzeigeeinstellungen</span>
        <svg width="26" height="25" viewBox="0 0 26 25" fill="none" stroke="#666" className="ml-[40px]">
          <path d="M.5.5h25v24H.5zM8 .5v24M8 18h17" />
          <rect x="11" y="4" width="10" height="10" />
        </svg>
        <svg width="26" height="25" viewBox="0 0 26 25" fill="none" stroke="#666" className="ml-[25px]">
          <path d="M.5.5h11v10H.5zM14.500.5h11v10h-11zM.5 14.500h11v10H.5zM14.500 14.500h11v10h-11z" />
        </svg>
        <svg width="26" height="25" viewBox="0 0 26 25" fill="none" stroke="#666" className="ml-[26px]">
          <path d="M.5 1.500l12.500 2 12.500-2v22l-12.500 2-12.500-2zM13 3v22M3 7h7M3 11h7M3 15h7M3 19h7M16 7h7M16 11h7M16 15h7M16 19h7" />
        </svg>
        <svg width="26" height="23" viewBox="0 0 26 23" fill="none" stroke="#666" className="ml-[26px]">
          <path d="M0 1.500h26" strokeWidth="3" />
          <path d="M4 2v12h18V2M8 8h9M13 14v8M8 22h10" />
        </svg>
        <div className="ml-[22px] w-[12px] h-[5px] bg-[#666666]" />
        <div className="relative ml-[9px] w-[199px] h-[3px] bg-[#b5b5b5]">
          <div className="absolute left-[68px] -top-[10px] w-[10px] h-[23px] bg-[#6b6b6b]" />
          <div className="absolute left-[99px] -top-[4px] w-px h-[11px] bg-[#999999]" />
        </div>
        <svg width="16" height="16" viewBox="0 0 16 16" fill="#666" className="ml-[7px]">
          <path d="M6.500 0h3v6.500H16v3H9.500V16h-3V9.500H0v-3h6.500z" />
        </svg>
        <span className="ml-[14px] w-[46px]">74 %</span>
        <svg width="26" height="25" viewBox="0 0 26 25" fill="none" stroke="#666" className="ml-[16px] mr-[12px]">
          <path d="M.5.5h25v24H.5z" />
          <path d="M13 3v5M11 5l2-2 2 2M13 22v-5M11 20l2 2 2-2M3 12.500h5M5 10.500l-2 2 2 2M23 12.500h-5M21 10.500l2 2-2 2" />
        </svg>
      </div>
    </div>
  )
}

export default function App() {
  return (
    <div className="relative w-[2560px] h-[1440px] overflow-hidden flex flex-col bg-[#e6e6e6] font-['Open_Sans',sans-serif]">
      <div className="bg-[#b7472a] h-[128px] shrink-0">
        <TitleBar />
        <TabBar />
      </div>
      <Ribbon />
      <div className="h-[1095px] flex shrink-0">
        <LeftPanel />
        <Editor />
      </div>
      <StatusBar />

      {/* cursor highlight + cursor sit over everything */}
      <div className="absolute left-[913px] top-[190px] w-[90px] h-[90px] rounded-full bg-[radial-gradient(circle,rgba(226,226,70,0.9)_60%,rgba(226,226,70,0)_72%)] z-10" />
      <DesignPopup />
      <svg width="27" height="39" viewBox="0 0 27 39" className="absolute left-[956px] top-[230px] z-30">
        <path d="M1 1v31l7-7 6 13 6-3-6-12h11z" fill="#fff" stroke="#111" strokeWidth="1.500" />
      </svg>
    </div>
  )
}
